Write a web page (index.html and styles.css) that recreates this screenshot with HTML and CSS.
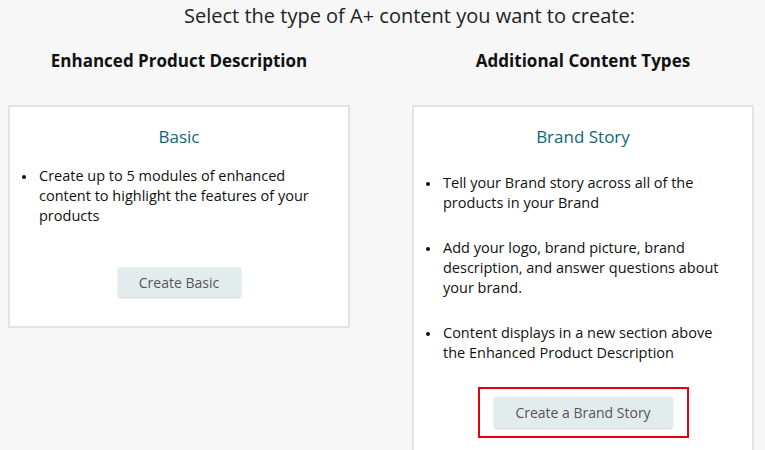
FILE: index.html
```html
<!DOCTYPE html>
<html lang="en">
<head>
    <meta charset="UTF-8">
    <title>A+ Content</title>
    <link rel="stylesheet" href="styles.css">
</head>
<body>
    <div class="page">
        <h1 class="page-title">Select the type of A+ content you want to create:</h1>
        <div class="columns">
            <div class="column">
                <h2 class="column-title">Enhanced Product Description</h2>
                <div class="card">
                    <h3 class="card-title">Basic</h3>
                    <ul class="card-list">
                        <li>Create up to 5 modules of enhanced content to highlight the features of your products</li>
                    </ul>
                    <div class="card-action">
                        <button class="btn btn-basic">Create Basic</button>
                    </div>
                </div>
            </div>
            <div class="column">
                <h2 class="column-title">Additional Content Types</h2>
                <div class="card">
                    <h3 class="card-title">Brand Story</h3>
                    <ul class="card-list spaced">
                        <li>Tell your Brand story across all of the products in your Brand</li>
                        <li>Add your logo, brand picture, brand description, and answer questions about your brand.</li>
                        <li>Content displays in a new section above the Enhanced Product Description</li>
                    </ul>
                    <div class="card-action">
                        <div class="highlight">
                            <button class="btn btn-story">Create a Brand Story</button>
                        </div>
                    </div>
                </div>
            </div>
        </div>
    </div>
</body>
</html>
```

FILE: styles.css
```css
* {
    margin: 0;
    padding: 0;
    box-sizing: border-box;
}

body {
    background: #f7f7f7;
    color: #111;
    font-family: 'Open Sans', 'Noto Sans', sans-serif;
    overflow: hidden;
}

.page {
    padding: 0 8px;
}

.page-title {
    padding: 3px 0 0 54px;
    text-align: center;
    font-size: 20px;
    font-weight: normal;
    line-height: 26px;
    color: #222;
}

.columns {
    display: flex;
    gap: 62px;
    margin-top: 20px;
}

.column {
    width: 342px;
    flex-shrink: 0;
}

.column-title {
    text-align: center;
    font-size: 17px;
    font-weight: 700;
    line-height: 24px;
    margin-bottom: 32px;
}

.card {
    background: #fff;
    border: 2px solid #e3e3e3;
    padding: 18px 24px 29px 12px;
}

.card-title {
    text-align: center;
    font-size: 17px;
    font-weight: normal;
    color: #0f6674;
    line-height: 24px;
    margin-bottom: 17px;
    padding-left: 12px;
}

.card-list {
    list-style: none;
    font-size: 14.5px;
    line-height: 20px;
}

.card-list li {
    display: flex;
}

.card-list li::before {
    content: "";
    flex-shrink: 0;
    width: 4px;
    height: 4px;
    border-radius: 50%;
    background: #111;
    margin: 9px 13px 0 0;
}

.card-list.spaced {
    padding-top: 7px;
}

.card-list.spaced li {
    margin-bottom: 25px;
}

.card-list.spaced li:last-child {
    margin-bottom: 0;
}

.card-action {
    display: flex;
    justify-content: center;
    padding-left: 12px;
}

.btn {
    background: #e3eced;
    border: none;
    border-radius: 3px;
    box-shadow: 0 1px 2px rgba(0, 0, 0, 0.2);
    color: #555;
    font-family: inherit;
    font-size: 14px;
    height: 30px;
}

.btn-basic {
    width: 123px;
    margin-top: 41px;
}

.highlight {
    margin-top: 24px;
    border: 2px solid #e5000f;
    padding: 8px 14px;
}

.btn-story {
    width: 179px;
    height: 31px;
}
```
